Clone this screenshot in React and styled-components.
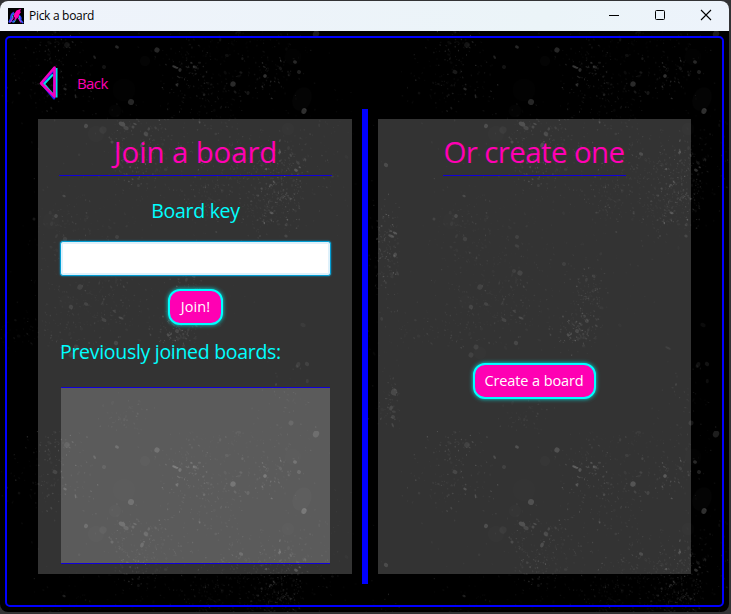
import React from "react";
import styled, { createGlobalStyle } from "styled-components";

const GlobalStyle = createGlobalStyle`
  * { box-sizing: border-box; }
  html, body { margin: 0; padding: 0; background: #2b2b2d; }
  body { font-family: "Open Sans", "Noto Sans", sans-serif; overflow: hidden; }
`;

const Desktop = styled.div`
  width: 731px;
  height: 614px;
  padding: 1px 2px 2px 0;
  background: #333335;
  overflow: hidden;
`;

const Window = styled.div`
  display: flex;
  flex-direction: column;
  width: 729px;
  height: 611px;
  border-radius: 8px;
  overflow: hidden;
  background: #000;
`;

const TitleBar = styled.header`
  display: flex;
  align-items: center;
  flex: none;
  height: 30px;
  padding-left: 8px;
  background: linear-gradient(90deg, #eff3fb, #ebf4f8 75%, #edf3fb);
`;

const AppIcon = styled.svg`
  width: 16px;
  height: 16px;
  margin-right: 5px;
  margin-top: -1px;
`;

const WindowTitle = styled.span`
  flex: 1;
  font-size: 12px;
  line-height: 16px;
  letter-spacing: ${(p) => p.$tracking};
  color: #000;
`;

const WindowButton = styled.button`
  display: flex;
  align-items: center;
  justify-content: center;
  width: 46px;
  height: 30px;
  padding: 0 0 2px;
  border: 0;
  background: transparent;
`;

const Content = styled.main`
  position: relative;
  flex: 1;
  padding: 5px;
`;

const Dust = styled.svg`
  position: absolute;
  inset: 0;
  width: 729px;
  height: 581px;
  pointer-events: none;
`;

const Frame = styled.div`
  position: relative;
  display: flex;
  flex-direction: column;
  width: 719px;
  height: 571px;
  padding: 27px 31px 21px;
  border: 2px solid #0000ff;
  border-radius: 5px;
`;

const BackLink = styled.a`
  display: flex;
  align-items: center;
  gap: 17px;
  height: 35px;
  font-size: 15px;
  letter-spacing: -0.6px;
  color: #ff00b3;
`;

const BackArrow = styled.svg`
  width: 22px;
  height: 35px;
`;

const Boards = styled.div`
  display: flex;
  align-items: center;
  height: 475px;
  margin-top: 9px;
`;

const Panel = styled.section`
  display: flex;
  flex-direction: column;
  align-items: center;
  width: ${(p) => p.$width};
  height: 455px;
  padding: ${(p) => p.$padding};
  background: rgba(255, 255, 255, 0.2);
`;

const Divider = styled.div`
  width: 6px;
  height: 475px;
  margin: 0 10px;
  background: #0000ff;
`;

const Heading = styled.h1`
  width: ${(p) => p.$width};
  height: 47px;
  margin: 0;
  border-bottom: 1px solid #1000d8;
  font-size: 29.5px;
  font-weight: 400;
  line-height: 46px;
  letter-spacing: ${(p) => p.$tracking};
  text-align: center;
  white-space: nowrap;
  color: #ff00b3;
`;

const Label = styled.label`
  align-self: ${(p) => p.$align};
  height: 28px;
  margin: ${(p) => p.$margin};
  font-size: 19.5px;
  line-height: 28px;
  letter-spacing: ${(p) => p.$tracking};
  white-space: nowrap;
  color: #00ffff;
`;

const KeyInput = styled.input`
  width: 271px;
  height: 35px;
  padding: 4px 8px;
  border: 1px solid #039ed3;
  border-radius: 3px;
  outline: none;
  background: #fff;
  box-shadow: 0 0 2px #039ed3, inset 0 0 0 2px #dff1fb;
`;

const GlowButton = styled.button`
  width: ${(p) => p.$width};
  height: 36px;
  margin-top: ${(p) => p.$top};
  padding: 0 0 2px;
  border: 2px solid #00ffff;
  border-radius: 12px;
  background: #ff00b3;
  box-shadow: 0 0 4px #00e0e0;
  font-family: inherit;
  font-size: 14.5px;
  letter-spacing: ${(p) => p.$tracking};
  white-space: nowrap;
  color: #fff;
`;

const BoardList = styled.div`
  width: 269px;
  height: 177px;
  margin-top: 21px;
  border-top: 1px solid #1000d8;
  border-bottom: 1px solid #1000d8;
  background: rgba(255, 255, 255, 0.2);
  background-clip: padding-box;
`;

// [x, y, rx, ry, opacity] inside the 400px texture tile
const SPECKS = [
  [117, 16, 2, 1.5, 0.2], [157, 19, 2.6, 2.6, 0.2], [175, 36, 3, 1.2, 0.28], [180, 39, 1.5, 2, 0.2],
  [195, 36, 2.4, 1.3, 0.18], [233, 53, 2.6, 2.8, 0.22], [265, 45, 1.8, 1.8, 0.25], [295, 31, 2, 1.7, 0.2],
  [299, 41, 2, 2, 0.16], [304, 80, 2.5, 3, 0.24], [131, 71, 3, 3, 0.2], [65, 58, 1.8, 1.2, 0.2],
  [86, 95, 2, 2.2, 0.18], [122, 93, 3.4, 2.2, 0.2], [126, 97, 2.8, 2, 0.14], [146, 103, 2.3, 2.3, 0.16],
  [133, 96, 1.5, 1.5, 0.15], [112, 111, 1.5, 1.5, 0.16], [142, 114, 1.7, 2.5, 0.18], [67, 14, 2.8, 2.8, 0.1],
  [55, 41, 2.5, 2, 0.13], [64, 165, 1.7, 1.2, 0.15], [56, 185, 1.8, 2, 0.15], [65, 208, 2.2, 2.2, 0.1],
  [117, 206, 2, 2, 0.1], [117, 215, 2.4, 1.5, 0.1], [120, 242, 2.6, 2.6, 0.12], [114, 240, 2, 2, 0.08],
  [164, 233, 2, 2, 0.09], [80, 256, 2.6, 2.8, 0.11], [71, 276, 2.2, 2.2, 0.12], [86, 273, 2.2, 1.6, 0.12],
  [104, 289, 2.6, 1.7, 0.12], [121, 287, 2.8, 1, 0.16], [116, 312, 2.2, 2.2, 0.13], [76, 316, 2.4, 2.4, 0.1],
  [71, 324, 2.4, 2.6, 0.1], [187, 290, 2, 2, 0.12], [177, 300, 2, 2, 0.14], [303, 294, 2.7, 2, 0.06],
  [298, 334, 2, 3, 0.09], [307, 333, 2.2, 2, 0.1], [268, 317, 3, 1, 0.09], [291, 392, 2.4, 2.4, 0.12],
  [241, 123, 2.2, 1.6, 0.18], [286, 205, 1.7, 1.5, 0.13], [386, 134, 2.2, 2, 0.16], [395, 202, 2.4, 1.2, 0.24],
  [391, 205, 3, 1.3, 0.2], [395, 224, 1.8, 2.5, 0.17], [394, 361, 3, 3.4, 0.14], [391, 377, 1.6, 2.5, 0.14],
  [393, 386, 2, 2, 0.12], [316, 3, 3, 3.6, 0.15], [104, 36, 2, 2, 0.1], [248, 62, 1.5, 2, 0.12],
  [124, 59, 11, 11, 0.012], [302, 68, 9, 12, 0.02], [293, 26, 8, 8, 0.012], [145, 30, 5, 5, 0.02],
  [115, 80, 6, 6, 0.016], [96, 103, 8, 8, 0.014], [51, 190, 8, 8, 0.012], [66, 271, 7, 7, 0.012],
  [288, 98, 6, 6, 0.016], [103, 99, 3.5, 3.5, 0.05], [80, 322, 6, 6, 0.014],
];

// [x, y, spread x, spread y, count, brightness]
const CLUSTERS = [
  [55, 24, 18, 22, 160, 0.09], [50, 60, 25, 12, 60, 0.06], [185, 38, 17, 13, 90, 0.1],
  [215, 68, 18, 16, 120, 0.08], [270, 45, 22, 12, 90, 0.1], [150, 108, 25, 16, 150, 0.08],
  [138, 137, 15, 14, 110, 0.08], [205, 170, 14, 18, 100, 0.06], [262, 145, 28, 20, 320, 0.07],
  [284, 158, 10, 18, 160, 0.11], [258, 185, 14, 12, 90, 0.07], [70, 205, 18, 28, 160, 0.05],
  [110, 255, 25, 25, 130, 0.05], [188, 268, 10, 18, 140, 0.08], [177, 301, 10, 10, 120, 0.09],
  [90, 282, 30, 18, 150, 0.06], [35, 298, 25, 10, 80, 0.05], [390, 215, 9, 24, 140, 0.11],
  [385, 285, 12, 30, 50, 0.05], [390, 376, 8, 16, 80, 0.07], [125, 385, 13, 9, 60, 0.05],
  [285, 375, 14, 20, 60, 0.05], [235, 12, 40, 12, 130, 0.04], [160, 205, 60, 50, 240, 0.03],
  [320, 130, 25, 30, 90, 0.05],
];

function makeDust() {
  let state = 90127;
  const rnd = () => {
    state = (state + 0x6d2b79f5) | 0;
    let t = Math.imul(state ^ (state >>> 15), 1 | state);
    t = (t + Math.imul(t ^ (t >>> 7), 61 | t)) ^ t;
    return ((t ^ (t >>> 14)) >>> 0) / 4294967296;
  };
  const gauss = () => (rnd() + rnd() + rnd() - 1.5) * 2;
  const out = [];
  CLUSTERS.forEach(([cx, cy, sx, sy, count, light]) => {
    for (let i = 0; i < count; i += 1) {
      const big = rnd() > 0.93 ? 1.5 : 0.75;
      out.push({
        x: (cx + gauss() * sx).toFixed(1),
        y: (cy + gauss() * sy).toFixed(1),
        rx: (big * (0.5 + rnd())).toFixed(2),
        ry: (big * (0.4 + rnd() * 0.6)).toFixed(2),
        turn: Math.round(rnd() * 120),
        o: (light * (0.3 + rnd() * rnd() * 2)).toFixed(3),
      });
    }
  });
  return out;
}

const DUST = makeDust();

function DustTexture() {
  return (
    <Dust aria-hidden="true">
      <defs>
        <pattern id="dust" width="400" height="400" patternUnits="userSpaceOnUse">
          <g fill="#fff">
            {DUST.map((d, i) => (
              <ellipse key={i} cx={d.x} cy={d.y} rx={d.rx} ry={d.ry} opacity={d.o} transform={`rotate(${d.turn} ${d.x} ${d.y})`} />
            ))}
            {SPECKS.map(([x, y, rx, ry, o], i) => (
              <ellipse key={i} cx={x} cy={y} rx={rx} ry={ry} opacity={o * 0.75} transform={`rotate(25 ${x} ${y})`} />
            ))}
          </g>
        </pattern>
      </defs>
      <rect width="100%" height="100%" fill="url(#dust)" />
    </Dust>
  );
}

function Logo() {
  return (
    <AppIcon viewBox="0 0 16 16">
      <rect width="16" height="16" fill="#000" />
      <path d="M6 4.5Q2.5 6.5 3 10.5L1 14.5M6 12.5 4.5 14.5M11 7.5q2.5 2 1.5 4.5l2.500 3" fill="none" stroke="#3448ff" strokeWidth="1.7" />
      <path d="M6.500 5.500Q4 7.500 4.200 10.500L3 14M11.500 8v3.500l2 2.500M8 11l-2 3.500" fill="none" stroke="#19c4dc" strokeWidth="1" />
      <path d="M13 0.800 8.500 2.500 6.500 5.500l-1 3.500 1.500.500-1 3.500 4.500-4 1-3 1.500-2-1-.7z" fill="#ff00b3" />
      <path d="M5.500 9.500 2 14.500M10 9.500l3 5" fill="none" stroke="#c81ce0" strokeWidth="1.200" />
    </AppIcon>
  );
}

export default function App() {
  return (
    <>
      <GlobalStyle />
      <Desktop>
        <Window>
          <TitleBar>
            <Logo />
            <WindowTitle $tracking="-0.3px">Pick a board</WindowTitle>
            <WindowButton aria-label="Minimize">
              <svg width="12" height="12" viewBox="0 0 12 12"><path d="M1 6.5h10" stroke="#000" /></svg>
            </WindowButton>
            <WindowButton aria-label="Maximize">
              <svg width="12" height="12" viewBox="0 0 12 12"><rect x="1.5" y="1.5" width="9" height="9" rx="1" fill="none" stroke="#000" /></svg>
            </WindowButton>
            <WindowButton aria-label="Close">
              <svg width="12" height="12" viewBox="0 0 12 12"><path d="m1 1 10 10M11 1 1 11" stroke="#000" strokeWidth="1.1" /></svg>
            </WindowButton>
          </TitleBar>
          <Content>
            <DustTexture />
            <Frame>
              <BackLink>
                <BackArrow viewBox="0 0 22 35" fill="none" strokeLinejoin="round">
                  <path d="M17 3.5 4 19 16 33.200z" stroke="#1a1aff" strokeWidth="2.6" />
                  <path d="M18.500 3v29.500M15 9.500 6 19 14.500 29" stroke="#00e0e4" strokeWidth="2" />
                  <path d="M16.500 2.500 3 18.300 16.500 31.500z" stroke="#f000c0" strokeWidth="2.6" />
                </BackArrow>
                Back
              </BackLink>
              <Boards>
                <Panel $width="314px" $padding="10px 20px 10px 21px">
                  <Heading $width="273px" $tracking="-0.15px">Join a board</Heading>
                  <Label $align="center" $margin="21px 0 16px 0" $tracking="-0.3px">Board key</Label>
                  <KeyInput aria-label="Board key" />
                  <GlowButton $width="55px" $top="13px" $tracking="0.1px">Join!</GlowButton>
                  <Label $align="flex-start" $margin="13px 0 0 1px" $tracking="-0.3px">Previously joined boards:</Label>
                  <BoardList />
                </Panel>
                <Divider />
                <Panel $width="313px" $padding="10px 21px 10px 20px">
                  <Heading $width="183px" $tracking="-0.6px">Or create one</Heading>
                  <GlowButton $width="123px" $top="187px" $tracking="-0.1px">Create a board</GlowButton>
                </Panel>
              </Boards>
            </Frame>
          </Content>
        </Window>
      </Desktop>
    </>
  );
}
